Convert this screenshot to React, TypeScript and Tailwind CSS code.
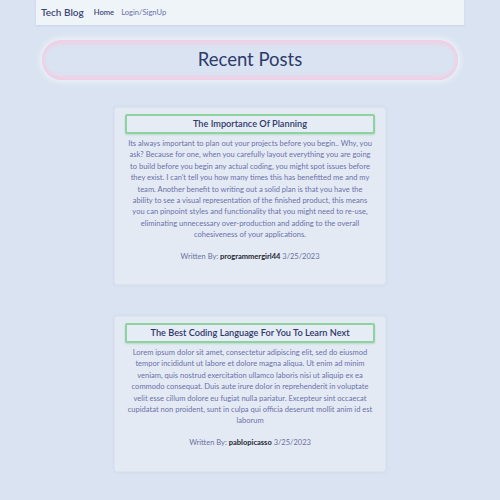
const posts = [
  {
    title: 'The Importance Of Planning',
    body: "Its always important to plan out your projects before you begin.. Why, you ask? Because for one, when you carefully layout everything you are going to build before you begin any actual coding, you might spot issues before they exist. I can't tell you how many times this has benefitted me and my team. Another benefit to writing out a solid plan is that you have the ability to see a visual representation of the finished product, this means you can pinpoint styles and functionality that you might need to re-use, eliminating unnecessary over-production and adding to the overall cohesiveness of your applications.",
    author: 'programmergirl44',
    date: '3/25/2023',
  },
  {
    title: 'The Best Coding Language For You To Learn Next',
    body: 'Lorem ipsum dolor sit amet, consectetur adipiscing elit, sed do eiusmod tempor incididunt ut labore et dolore magna aliqua. Ut enim ad minim veniam, quis nostrud exercitation ullamco laboris nisi ut aliquip ex ea commodo consequat. Duis aute irure dolor in reprehenderit in voluptate velit esse cillum dolore eu fugiat nulla pariatur. Excepteur sint occaecat cupidatat non proident, sunt in culpa qui officia deserunt mollit anim id est laborum',
    author: 'pablopicasso',
    date: '3/25/2023',
  },
];

export default function App() {
  return (
    <div className="min-h-[500px] bg-[#dae3f1] font-['Lato',sans-serif]">
      {/* nav */}
      <nav className="mx-[36px] h-[25px] bg-[#eff4f9] flex items-center px-[5px] shadow-[0_1px_2px_rgba(160,175,205,0.3)]">
        <span className="text-[10px] font-semibold text-[#3c4774]">Tech Blog</span>
        <span className="ml-[10px] text-[7.6px] font-semibold text-[#3c4774]">Home</span>
        <span className="ml-[7px] text-[7.6px] text-[#6b72a8]">Login/SignUp</span>
      </nav>

      {/* heading */}
      <div className="mx-[42px] mt-[15px] h-[40px] rounded-full bg-[#dae3f1] flex items-center justify-center shadow-[inset_0_3px_4px_rgba(250,200,225,0.9),inset_0_-3px_4px_rgba(250,200,225,0.9),0_0_6px_2px_rgba(240,245,252,0.9)]">
        <h1 className="text-[18.5px] text-[#2e3b6c]">Recent Posts</h1>
      </div>

      <div className="flex flex-col items-center gap-[31px] mt-[27px]">
        {posts.map((p, i) => (
          <div
            key={p.title}
            className={`w-[272px] ${i === 0 ? 'h-[178px]' : 'h-[156px]'} bg-[#e4eaf4] rounded-[3px] border border-[#dde4f0] shadow-[0_0_3px_rgba(200,212,232,0.9)] px-[9px] pt-[6px] text-center`}
          >
            <div className="h-[20px] mx-[1px] border-2 border-[#8ed39f] rounded-[2px] bg-[#e6ecf6] flex items-center justify-center shadow-[0_1px_2px_rgba(120,190,140,0.4)]">
              <h2 className="text-[9.2px] font-semibold text-[#2e3868]">{p.title}</h2>
            </div>
            <p className="mt-[4px] w-[245px] mx-auto text-[7.55px] leading-[11.4px] text-[#6b71aa]">{p.body}</p>
            <p className="mt-[10px] text-[7.5px] text-[#6a71a0]">
              Written By: <span className="font-bold text-[#1e2733]">{p.author}</span> {p.date}
            </p>
          </div>
        ))}
      </div>
    </div>
  );
}
